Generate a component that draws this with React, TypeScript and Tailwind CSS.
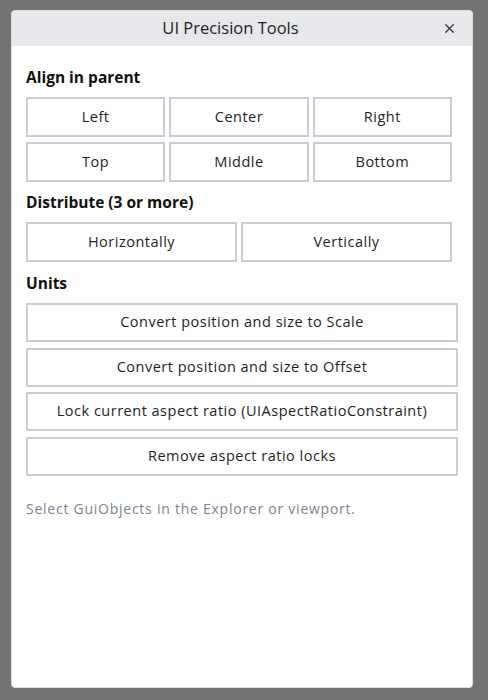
import { X } from "lucide-react";

const align = ["Left", "Center", "Right", "Top", "Middle", "Bottom"];
const distribute = ["Horizontally", "Vertically"];
const units = [
  "Convert position and size to Scale",
  "Convert position and size to Offset",
  "Lock current aspect ratio (UIAspectRatioConstraint)",
  "Remove aspect ratio locks",
];

const btn =
  "flex items-center justify-center bg-white border-2 border-[#caccd6] text-[14.5px] tracking-[0.5px] text-[#1e1e1e] leading-none";

export default function App() {
  return (
    <div className="w-[488px] h-[700px] bg-[#737373] pt-[10px] pl-[11px] font-['Open_Sans','Liberation_Sans',sans-serif]">
      <div className="w-[462px] h-[678px] bg-white rounded-[4px] overflow-hidden border border-[#dcdde2] flex flex-col">
        {/* Title bar */}
        <div className="h-[35px] shrink-0 bg-[#e7e8eb] flex items-center pl-[12px] pr-[11px]">
          <div className="flex-1 text-center text-[16.5px] text-[#222]">UI Precision Tools</div>
          <button className="w-[24px] h-[24px] flex items-center justify-center text-[#333]">
            <X className="w-[15px] h-[15px]" strokeWidth={2} />
          </button>
        </div>

        <div className="px-[14px] pt-[21px]">
          <h2 className="text-[15.5px] leading-[20px] font-bold text-[#111]">Align in parent</h2>
          <div className="mt-[10px] w-[426px] grid grid-cols-3 gap-x-[4px] gap-y-[5px]">
            {align.map(a => (
              <button key={a} className={`${btn} h-[40px]`}>{a}</button>
            ))}
          </div>

          <h2 className="mt-[10px] text-[15.5px] leading-[20px] font-bold text-[#111]">Distribute (3 or more)</h2>
          <div className="mt-[10px] w-[426px] grid grid-cols-2 gap-[4px]">
            {distribute.map(d => (
              <button key={d} className={`${btn} h-[40px]`}>{d}</button>
            ))}
          </div>

          <h2 className="mt-[11px] text-[15.5px] leading-[20px] font-bold text-[#111]">Units</h2>
          <div className="mt-[10px] w-[432px] flex flex-col gap-[5.5px]">
            {units.map(u => (
              <button key={u} className={`${btn} h-[39px]`}>{u}</button>
            ))}
          </div>

          <p className="mt-[23px] text-[14px] leading-[20px] tracking-[0.75px] text-[#7b8394]">
            Select GuiObjects in the Explorer or viewport.
          </p>
        </div>
      </div>
    </div>
  );
}
